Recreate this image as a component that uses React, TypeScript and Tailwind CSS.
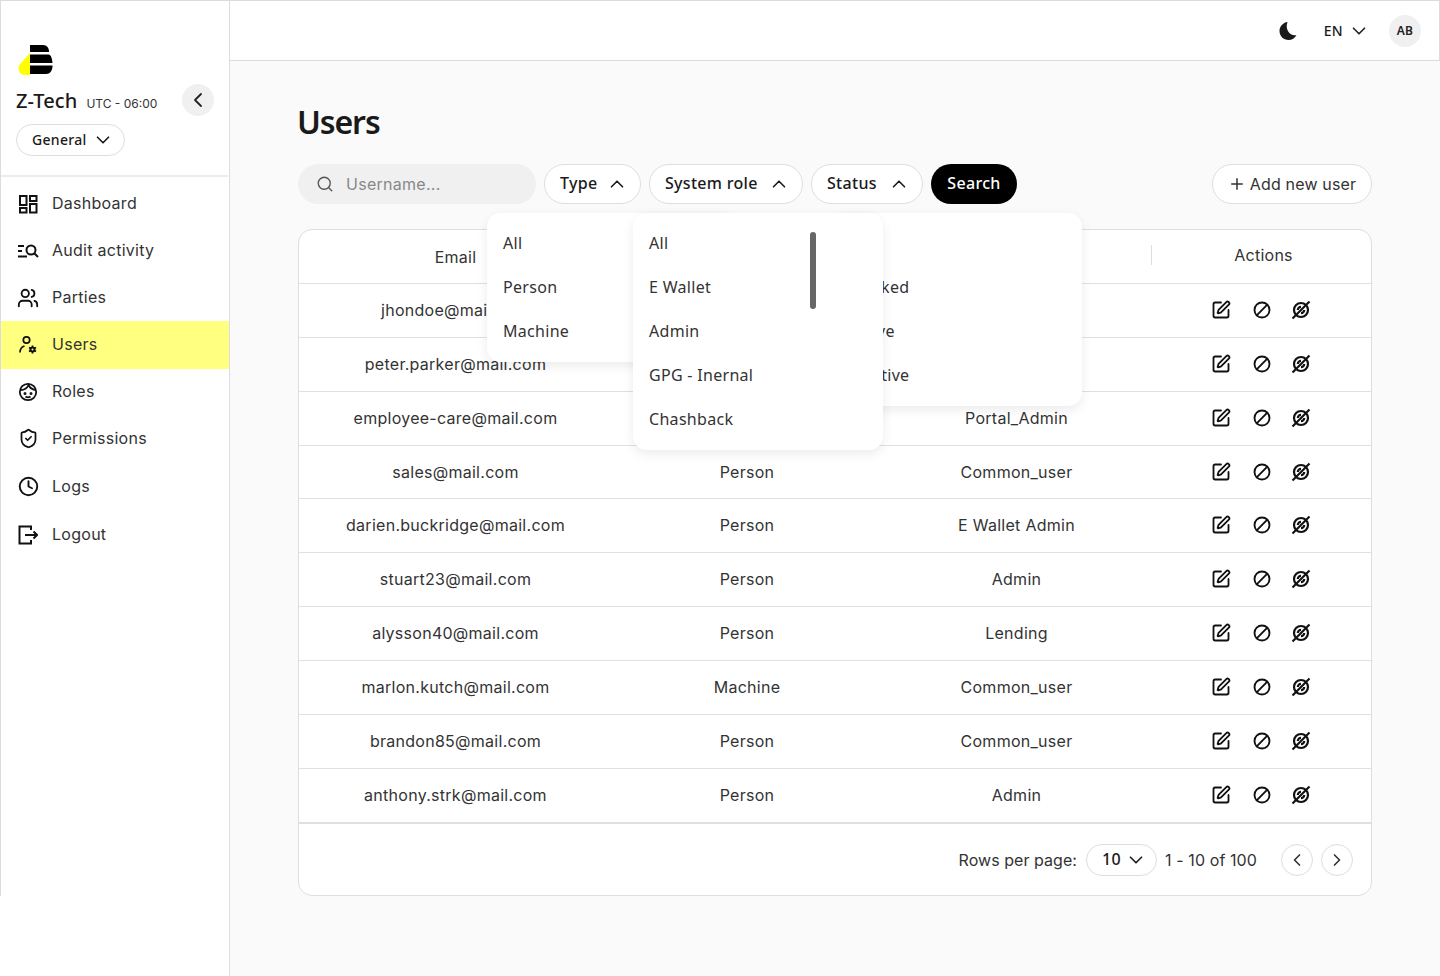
import { ChevronDown, ChevronLeft, ChevronRight, ChevronUp, Ban, Clock, Plus, Search, ShieldCheck, SquarePen, Users as UsersIcon } from "lucide-react";

const body = "font-['Inter',sans-serif] tracking-[0.27px]";
const plex = "font-['Noto_Sans',sans-serif] tracking-[0.3px]";

const rows = [
  { email: "jhondoe@mail.com", type: "Person", role: "Admin" },
  { email: "peter.parker@mail.com", type: "Person", role: "Admin" },
  { email: "employee-care@mail.com", type: "Person", role: "Portal_Admin" },
  { email: "sales@mail.com", type: "Person", role: "Common_user" },
  { email: "darien.buckridge@mail.com", type: "Person", role: "E Wallet Admin" },
  { email: "stuart23@mail.com", type: "Person", role: "Admin" },
  { email: "alysson40@mail.com", type: "Person", role: "Lending" },
  { email: "marlon.kutch@mail.com", type: "Machine", role: "Common_user" },
  { email: "brandon85@mail.com", type: "Person", role: "Common_user" },
  { email: "anthony.strk@mail.com", type: "Person", role: "Admin" },
];

function Logo() {
  return (
    <svg width="36" height="32" viewBox="0 0 36 32">
      <path d="M12 9 L2.5 19.5 C-1.5 24 1 31 7 31 H12 Z" fill="#ffff00" />
      <path d="M12 1 H25 C29 1 31 4 31 8 H12 Z" fill="#000" />
      <path d="M12 10.5 H30 C32.5 10.5 34 13 34.5 19 H12 Z" fill="#000" />
      <path d="M12 21.5 H34.5 C34.5 27 32 30 28 30 H12 Z" fill="#000" />
    </svg>
  );
}

function DashIcon() {
  return (
    <svg width="20" height="20" viewBox="0 0 20 20" fill="none" stroke="#111" strokeWidth="2">
      <rect x="2" y="2" width="6.5" height="9" />
      <rect x="12" y="2" width="6.5" height="5" />
      <rect x="2" y="14" width="6.5" height="4.5" />
      <rect x="12" y="10" width="6.5" height="8.5" />
    </svg>
  );
}

function AuditIcon() {
  return (
    <svg width="22" height="20" viewBox="0 0 22 20" fill="none" stroke="#111" strokeWidth="2">
      <path d="M1 5 H7 M1 10 H5 M1 15.5 H10" />
      <circle cx="14" cy="9" r="4.5" />
      <path d="M17.5 12.5 L21 16" />
    </svg>
  );
}

function UserGearIcon() {
  return (
    <svg width="20" height="20" viewBox="0 0 20 20" fill="none" stroke="#111" strokeWidth="1.7">
      <circle cx="8.5" cy="5" r="3.2" />
      <path d="M2 17.5 C2 14.5 3.5 12 6.5 11" />
      <circle cx="14.5" cy="14.5" r="2" strokeWidth="2" />
      <path d="M14.5 10.5 V12 M14.5 17 V18.5 M11 12.5 L12.4 13.3 M16.6 15.7 L18 16.5 M11 16.5 L12.4 15.7 M16.6 13.3 L18 12.5" />
    </svg>
  );
}

function FaceIcon() {
  return (
    <svg width="20" height="20" viewBox="0 0 20 20" fill="none" stroke="#111" strokeWidth="1.8">
      <circle cx="10" cy="10" r="8.2" />
      <path d="M2.5 8 C6 8 9 6.5 10.5 3 C12 6 14.5 7.5 17.5 8" />
      <circle cx="7" cy="11.5" r="0.6" fill="#111" />
      <circle cx="13" cy="11.5" r="0.6" fill="#111" />
      <path d="M7.5 14.5 C9 15.6 11 15.6 12.5 14.5" />
    </svg>
  );
}

function LogoutIcon() {
  return (
    <svg width="20" height="20" viewBox="0 0 20 20" fill="none" stroke="#111" strokeWidth="2">
      <path d="M13 5 V1.5 H1.5 V18.5 H13 V15" />
      <path d="M7 10 H19 M15.5 6.5 L19 10 L15.5 13.5" />
    </svg>
  );
}

function EyeBlockIcon() {
  return (
    <svg width="20" height="20" viewBox="0 0 20 20" fill="none" stroke="#111" strokeWidth="2.2">
      <circle cx="10" cy="10" r="7" />
      <path d="M6.8 10 a3.2 3.2 0 0 1 3.2 -3.2" />
      <path d="M13.2 10 a3.2 3.2 0 0 1 -3.2 3.2" />
      <path d="M1.5 18.5 L18.5 1.5" />
    </svg>
  );
}

function MoonIcon() {
  return (
    <svg width="20" height="20" viewBox="0 0 20 20" fill="#1a1a1a">
      <path d="M9.5 1 C5 1.6 1.5 5.4 1.5 10 C1.5 15 5.5 19 10.5 19 C14 19 17 17 18.5 14 C12.5 15.5 6.5 9 9.5 1 Z" />
    </svg>
  );
}

const navItems = [
  { label: "Dashboard", icon: <DashIcon />, h: "h-[47px]" },
  { label: "Audit activity", icon: <AuditIcon />, h: "h-[47px]" },
  { label: "Parties", icon: <UsersIcon size={22} strokeWidth={2} color="#111" />, h: "h-[47px]" },
  { label: "Users", icon: <UserGearIcon />, h: "h-[48px]", active: true },
  { label: "Roles", icon: <FaceIcon />, h: "h-[46px]" },
  { label: "Permissions", icon: <ShieldCheck size={21} strokeWidth={2} color="#111" />, h: "h-[47px]" },
  { label: "Logs", icon: <Clock size={21} strokeWidth={2.2} color="#111" />, h: "h-[49px]" },
  { label: "Logout", icon: <LogoutIcon />, h: "h-[48px]" },
];

function FilterButton({ label, width }: { label: string; width: string }) {
  return (
    <button className={`${width} ${plex} h-10 rounded-full border border-[#dedede] bg-white pl-[15px] pr-[12px] flex items-center justify-between text-[16px] font-medium text-[#1a1a1a]`}>
      <span className="pb-[2px]">{label}</span>
      <ChevronUp size={22} strokeWidth={1.8} />
    </button>
  );
}

function MenuItem({ children }: { children: string }) {
  return <div className={`${plex} h-11 flex items-center text-[16px] text-[#333]`}>{children}</div>;
}

export default function App() {
  return (
    <div className={`${body} flex h-[976px] w-[1440px] overflow-hidden bg-white text-[#333]`}>
      {/* Sidebar */}
      <aside className="w-[230px] shrink-0 border-r border-[#dcdcdc]">
        <div className="h-[896px] border-l border-t border-[#dcdcdc]">
          <div className="h-[174px] px-[15px] pt-[43px]">
            <div className="pl-[2px]"><Logo /></div>
            <div className="mt-[8px] flex items-center justify-between">
              <div className="flex items-baseline gap-[9px]">
                <span className={`${plex} text-[20px] font-medium !tracking-[0.1px] text-[#1a1a1a]`}>Z-Tech</span>
                <span className="text-[12px] tracking-[0px] text-[#333]">UTC - 06:00</span>
              </div>
              <button className="mb-[2px] w-8 h-8 rounded-full bg-[#f0f0f0] flex items-center justify-center">
                <ChevronLeft size={24} strokeWidth={1.8} color="#222" />
              </button>
            </div>
            <button className={`${plex} mt-[6px] w-[109px] h-8 rounded-full border border-[#dedede] flex items-center justify-between pl-[15px] pr-[10px] text-[14px] font-medium text-[#1a1a1a]`}>
              <span className="pb-[2px]">General</span>
              <ChevronDown size={22} strokeWidth={1.8} />
            </button>
          </div>
          <div className="border-t-2 border-[#ececec] mr-[1px]" />
          <nav className="pt-[3px]">
            {navItems.map((item) => (
              <div key={item.label} className={`${item.h} ${item.active ? "bg-[#ffff80]" : ""} flex items-center pl-[16px]`}>
                <span className="w-[22px] flex justify-center">{item.icon}</span>
                <span className="ml-[13px] pb-[2px] text-[16px] text-[#333]">{item.label}</span>
              </div>
            ))}
          </nav>
        </div>
      </aside>

      {/* Main */}
      <div className="flex-1 flex flex-col bg-[#fafafa]">
        <header className="h-[61px] shrink-0 bg-white border-t border-b border-r border-[#dcdcdc] flex items-center justify-end pr-[18px]">
          <MoonIcon />
          <span className={`${plex} ml-[26px] text-[14px] font-medium text-[#1a1a1a]`}>EN</span>
          <ChevronDown size={22} strokeWidth={1.8} className="ml-[5px]" color="#222" />
          <div className={`${plex} ml-[19px] w-8 h-8 rounded-full bg-[#f0f0f0] flex items-center justify-center text-[12px] font-semibold text-[#222]`}>AB</div>
        </header>

        <main className="relative px-[68px] pt-[41px]">
          <h1 className={`${plex} -ml-px text-[32px] leading-[40px] font-semibold !tracking-[-1.1px] text-[#1a1a1a]`}>Users</h1>

          <div className="mt-[22px] flex items-center">
            <div className="w-[238px] h-10 rounded-full bg-[#f0f0f0] flex items-center pl-[18px]">
              <Search size={18} strokeWidth={1.8} color="#555" />
              <span className="ml-[12px] text-[16px] text-[#888]">Username...</span>
            </div>
            <div className="ml-2"><FilterButton label="Type" width="w-[97px]" /></div>
            <div className="ml-2"><FilterButton label="System role" width="w-[154px]" /></div>
            <div className="ml-2"><FilterButton label="Status" width="w-[112px]" /></div>
            <button className={`${plex} ml-2 w-[86px] h-10 rounded-full bg-black text-white text-[16px] font-medium`}><span className="block pb-[2px]">Search</span></button>
            <button className="ml-auto w-[160px] h-10 rounded-full border border-[#dedede] bg-white flex items-center justify-center gap-[4px] text-[16px] tracking-[0.15px] text-[#333]">
              <Plus size={18} strokeWidth={2} />
              Add new user
            </button>
          </div>

          {/* Table */}
          <div className="mt-[25px] w-[1074px] h-[667px] rounded-[14px] border border-[#dedede] bg-white flex flex-col">
            <div className="h-[54px] grid grid-cols-[313px_270px_269px_1fr] items-center text-[16px] text-[#333] border-b border-[#e0e0e0] text-center">
              <span>Email</span>
              <span>Type</span>
              <span>System role</span>
              <span className="mb-1 border-l border-[#dedede] h-5 flex items-center justify-center pl-[4px]">Actions</span>
            </div>
            {rows.map((r, i) => (
              <div key={r.email} className={`${i === 3 ? "h-[53px]" : "h-[54px] pb-[2px]"} grid grid-cols-[313px_270px_269px_1fr] items-center text-[16px] text-[#333] border-b border-[#e0e0e0] text-center`}>
                <span>{r.email}</span>
                <span>{r.type}</span>
                <span>{r.role}</span>
                <span className="flex items-center pl-[60px] text-[#111]">
                  <SquarePen size={20} strokeWidth={2.2} />
                  <Ban size={18} strokeWidth={2.5} className="ml-[22px] -scale-x-100" />
                  <span className="ml-[20px]"><EyeBlockIcon /></span>
                </span>
              </div>
            ))}
            <div className="flex-1 border-t border-[#e0e0e0] flex items-center justify-end pr-[18px]">
              <span className="text-[16px] tracking-[0.05px] text-[#333]">Rows per page:</span>
              <button className={`${plex} ml-[9px] w-[71px] h-8 rounded-full border border-[#dedede] flex items-center justify-between pl-[15px] pr-[9px] text-[16px] font-medium text-[#1a1a1a]`}>
                <span className="pb-[2px]">10</span>
                <ChevronDown size={22} strokeWidth={1.8} />
              </button>
              <span className="ml-[8px] text-[16px] tracking-[0.1px] text-[#333]">1 - 10 of 100</span>
              <button className="ml-6 w-8 h-8 rounded-full border border-[#dedede] flex items-center justify-center"><ChevronLeft size={20} strokeWidth={2} /></button>
              <button className="ml-2 w-8 h-8 rounded-full border border-[#dedede] flex items-center justify-center"><ChevronRight size={20} strokeWidth={2} /></button>
            </div>
          </div>

          {/* Open dropdown menus */}
          <div className="absolute left-[257px] top-[152px] w-[250px] h-[149px] rounded-[14px] bg-white shadow-[0_4px_12px_rgba(0,0,0,0.08)] px-4 pt-[8px] z-10">
            <MenuItem>All</MenuItem>
            <MenuItem>Person</MenuItem>
            <MenuItem>Machine</MenuItem>
          </div>
          <div className="absolute left-[602px] top-[152px] w-[250px] h-[193px] rounded-[14px] bg-white shadow-[0_4px_12px_rgba(0,0,0,0.08)] px-4 pt-[8px] z-10">
            <MenuItem>All</MenuItem>
            <MenuItem>Blocked</MenuItem>
            <MenuItem>Active</MenuItem>
            <MenuItem>Inactive</MenuItem>
          </div>
          <div className="absolute left-[403px] top-[152px] w-[250px] h-[237px] rounded-[14px] bg-white shadow-[0_4px_12px_rgba(0,0,0,0.08)] px-4 pt-[8px] z-20">
            <MenuItem>All</MenuItem>
            <MenuItem>E Wallet</MenuItem>
            <MenuItem>Admin</MenuItem>
            <MenuItem>GPG - Inernal</MenuItem>
            <MenuItem>Chashback</MenuItem>
            <div className="absolute left-[177px] top-[19px] w-[6px] h-[77px] rounded-full bg-[#666]" />
          </div>
        </main>
      </div>
    </div>
  );
}
